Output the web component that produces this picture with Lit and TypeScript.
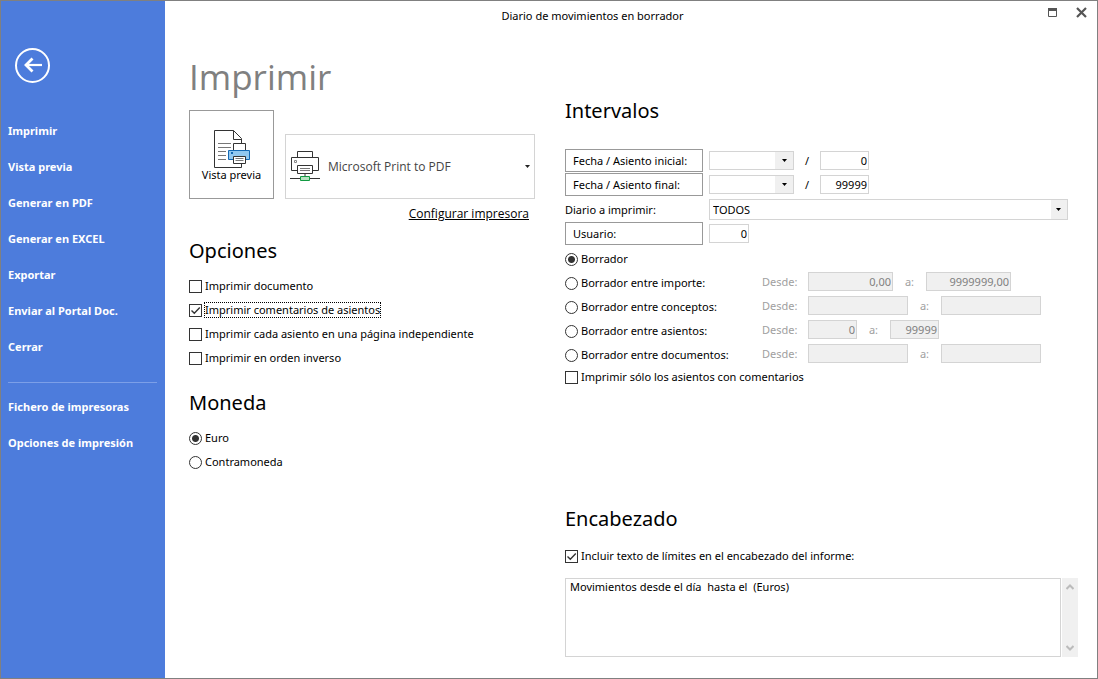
import { LitElement, html, css, svg } from "lit";
import { customElement, state } from "lit/decorators.js";

interface RangeRow {
  id: string;
  label: string;
  from: string;
  to: string;
  size: "amount" | "text" | "number";
}

const ACTIONS = [
  "Imprimir",
  "Vista previa",
  "Generar en PDF",
  "Generar en EXCEL",
  "Exportar",
  "Enviar al Portal Doc.",
  "Cerrar",
];

const SETTINGS = ["Fichero de impresoras", "Opciones de impresión"];

const OPTIONS = [
  { id: "documento", label: "Imprimir documento", checked: false },
  { id: "comentarios", label: "Imprimir comentarios de asientos", checked: true },
  { id: "pagina", label: "Imprimir cada asiento en una página independiente", checked: false },
  { id: "inverso", label: "Imprimir en orden inverso", checked: false },
];

const RANGES: RangeRow[] = [
  { id: "importe", label: "Borrador entre importe:", from: "0,00", to: "9999999,00", size: "amount" },
  { id: "conceptos", label: "Borrador entre conceptos:", from: "", to: "", size: "text" },
  { id: "asientos", label: "Borrador entre asientos:", from: "0", to: "99999", size: "number" },
  { id: "documentos", label: "Borrador entre documentos:", from: "", to: "", size: "text" },
];

const backIcon = svg`<svg width="36" height="36" viewBox="0 0 36 36" fill="none" stroke="#fff" aria-hidden="true">
  <circle cx="17.5" cy="18.5" r="16.5" stroke-width="2" />
  <path d="M10.5 18H27" stroke-width="2.2" />
  <path d="M17.5 11.5L11 18L17.5 24.5" stroke-width="2.8" />
</svg>`;

const previewIcon = svg`<svg width="38" height="40" viewBox="0 0 38 40" fill="none" aria-hidden="true">
  <path d="M1.5 1.5H20.5L28.5 9.5V38.5H1.5Z" fill="#fff" stroke="#333" />
  <path d="M20.5 1.5V10.5H28.5" stroke="#333" />
  <path d="M5 14.5H18M5 18.5H18M5 22.5H13M5 26.5H13M5 30.5H13" stroke="#777" />
  <path d="M20.5 14.5H32.5V22H20.5Z" fill="#fff" stroke="#333" />
  <path d="M15.5 21.5H36.5V30.5H15.5Z" fill="#91c8f0" stroke="#1469b4" />
  <path d="M18 23H20V25H18Z" fill="#1469b4" />
  <path d="M20.5 27.5H32.5V34.5H20.5Z" fill="#fff" stroke="#333" />
  <path d="M22.5 29.5H30.5M22.5 31.5H30.5" stroke="#777" />
</svg>`;

const printerIcon = svg`<svg width="30" height="31" viewBox="0 0 30 31" fill="none" aria-hidden="true">
  <path d="M7.5 6.5V0.5H22.5V6.5" stroke="#333" />
  <path d="M7.5 19.5H1.5V6.5H28.5V19.5H22.5" stroke="#333" />
  <path d="M4.5 9.5H6.5V11.5H4.5Z" stroke="#888" />
  <path d="M7.5 14.5H22.5V22.5H7.5Z" fill="#fff" stroke="#333" />
  <path d="M10 17.5H20M10 19.5H20" stroke="#777" />
  <path d="M15 23V25" stroke="#999" stroke-width="2" />
  <path d="M0 27.5H10M20 27.5H30" stroke="#333" />
  <path d="M10.5 25.5H19.5V29.5H10.5Z" fill="#b5e2c0" stroke="#129a42" />
</svg>`;

@customElement("app-root")
export class AppRoot extends LitElement {
  @state() private mode = "borrador";

  static styles = css`
    :host {
      display: block;
      font-family: "Noto Sans", sans-serif;
      font-size: 11px;
      line-height: 16px;
      color: #000;
    }
    * {
      box-sizing: border-box;
    }
    button,
    input,
    select,
    textarea {
      font: inherit;
      color: inherit;
      margin: 0;
      padding: 0;
      border: 0;
      border-radius: 0;
      background: none;
      outline: 0;
    }
    svg {
      display: block;
    }
    .window {
      display: flex;
      min-height: 100vh;
      border: 1px solid #808080;
      background: #fff;
    }

    .sidebar {
      flex: 0 0 164px;
      padding: 46px 8px 0 7px;
      background: #4d7cdc;
      color: #fff;
    }
    .back {
      display: block;
      margin: 0 0 30px 7px;
    }
    .menu {
      list-style: none;
      margin: 0;
      padding: 0;
    }
    .entry {
      display: block;
      width: 100%;
      height: 36px;
      text-align: left;
      font-weight: 700;
      white-space: nowrap;
    }
    .rule {
      height: 1px;
      margin: 17px 0 6px;
      border: 0;
      background: #7c9fe8;
    }

    .page {
      flex: 1;
      min-width: 0;
    }
    .titlebar {
      display: flex;
      height: 30px;
      align-items: center;
    }
    .caption {
      flex: 1;
      text-align: center;
    }
    .controls {
      display: flex;
      flex: 0 0 77px;
      justify-content: flex-end;
      gap: 18px;
      padding: 0 10px 8px 0;
    }
    .columns {
      display: grid;
      grid-template-columns: 346px minmax(0, 1fr);
      column-gap: 30px;
      padding: 0 19px 0 24px;
    }

    h1 {
      margin: 22px 0 9px;
      font-family: "Open Sans", sans-serif;
      font-size: 35px;
      line-height: 48px;
      font-weight: 400;
      color: #808080;
    }
    h2 {
      margin: 0;
      font-size: 20px;
      line-height: 32px;
      font-weight: 400;
    }

    .output {
      display: flex;
      align-items: flex-end;
      gap: 11px;
    }
    .preview {
      display: flex;
      flex-direction: column;
      align-items: center;
      width: 85px;
      height: 89px;
      padding: 18px 0 0;
      border: 1px solid #999;
    }
    .preview-label {
      margin-top: -2px;
    }
    .printer {
      display: flex;
      flex: 1;
      align-items: center;
      gap: 8px;
      height: 65px;
      padding: 0 4px;
      border: 1px solid #d4d4d4;
    }
    .printer select {
      flex: 1;
      height: 63px;
      appearance: none;
      font-family: "Open Sans", sans-serif;
      font-size: 12px;
      color: #444;
      background: url("data:image/svg+xml,%3Csvg xmlns='http://www.w3.org/2000/svg' width='5' height='3'%3E%3Cpath d='M0 0h5L2.5 3z' fill='%23222'/%3E%3C/svg%3E")
        right center no-repeat;
    }
    .configure {
      margin: 7px 6px 13px 0;
      text-align: right;
      font-family: "Open Sans", sans-serif;
      font-size: 12px;
    }
    .link {
      color: #000;
    }

    .choices {
      margin: 7px 0 17px;
    }
    .choice {
      display: flex;
      align-items: center;
      gap: 2px;
      height: 24px;
    }
    .short {
      height: 20px;
    }
    .text {
      padding: 0 1px;
      white-space: nowrap;
    }
    .focused {
      outline: 1px dotted #000;
      outline-offset: -1px;
    }
    .box,
    .dot {
      flex: none;
      width: 13px;
      height: 13px;
      appearance: none;
      border: 1px solid #333;
      background: #fff;
    }
    .box:checked {
      background: url("data:image/svg+xml,%3Csvg xmlns='http://www.w3.org/2000/svg' width='11' height='11'%3E%3Cpath d='M1.5 5.5L4.3 8.2L9.8 2.6' fill='none' stroke='%23333' stroke-width='1.4'/%3E%3C/svg%3E")
        center no-repeat;
    }
    .dot {
      border-radius: 50%;
    }
    .dot:checked {
      background: radial-gradient(circle, #333 3px, transparent 4px);
    }

    .intervals {
      padding-top: 64px;
    }
    .fields {
      margin-top: 22px;
    }
    .row {
      display: flex;
      align-items: center;
      height: 24px;
      padding-bottom: 1px;
    }
    .low {
      padding: 1px 0 0;
    }
    .picker,
    .name {
      flex: none;
      width: 138px;
      margin-right: 6px;
      text-align: left;
    }
    .picker {
      height: 23px;
      padding-left: 7px;
      border: 1px solid #999;
    }
    .field {
      flex: none;
      height: 19px;
      border: 1px solid #d4d4d4;
      background: #fff;
      text-align: right;
      padding: 0 1px 1px;
    }
    .combo {
      flex: none;
      width: 85px;
      height: 19px;
      appearance: none;
      padding: 0 18px 0 3px;
      border: 1px solid #d4d4d4;
      background:
        url("data:image/svg+xml,%3Csvg xmlns='http://www.w3.org/2000/svg' width='5' height='3'%3E%3Cpath d='M0 0h5L2.5 3z'/%3E%3C/svg%3E")
          right 6px center no-repeat,
        linear-gradient(#f0f0f0, #f0f0f0) right / 18px 100% no-repeat;
    }
    .journal {
      flex: 1;
      height: 21px;
      margin-right: 10px;
      background-size: auto, 16px 100%;
    }
    .slash {
      width: 26px;
      text-align: center;
    }
    .number {
      width: 49px;
    }
    .user {
      width: 40px;
    }
    .amount {
      width: 85px;
    }
    .wide {
      width: 100px;
    }
    .modes {
      margin-top: 2px;
    }
    .range {
      display: flex;
      height: 24px;
    }
    .range .choice {
      flex: 0 0 197px;
    }
    .span {
      display: flex;
      align-items: center;
      height: 21px;
      color: #a0a0a0;
    }
    .since {
      width: 46px;
    }
    .until {
      width: 33px;
      text-align: center;
    }
    .span .field {
      background: #f0f0f0;
      color: #808080;
    }

    .heading {
      margin-top: 116px;
    }
    .include {
      margin: 9px 0 10px;
    }
    .note {
      display: flex;
      gap: 1px;
      height: 79px;
    }
    .note textarea {
      flex: 1;
      resize: none;
      overflow: hidden;
      padding: 0 4px;
      border: 1px solid #d4d4d4;
      white-space: pre-wrap;
    }
    .scroller {
      display: flex;
      flex-direction: column;
      justify-content: space-between;
      align-items: center;
      width: 16px;
      padding: 6px 0;
      background: #f0f0f0;
    }
  `;

  private renderRange(r: RangeRow) {
    const size = r.size === "text" ? "wide" : r.size;
    return html`<div class="range">
      <label class="choice">
        <input class="dot" type="radio" name="mode" .checked=${this.mode === r.id}
          @change=${() => (this.mode = r.id)} />
        <span class="text">${r.label}</span>
      </label>
      <div class="span">
        <label class="since" for="${r.id}-from">Desde:</label>
        <input class="field ${size}" id="${r.id}-from" .value=${r.from} ?disabled=${this.mode !== r.id} />
        <label class="until" for="${r.id}-to">a:</label>
        <input class="field ${size}" id="${r.id}-to" .value=${r.to} ?disabled=${this.mode !== r.id} />
      </div>
    </div>`;
  }

  private renderDateRow(label: string, entry: string) {
    return html`<div class="row">
      <button class="picker">${label}</button>
      <select class="combo" aria-label=${label}><option></option></select>
      <span class="slash">/</span>
      <input class="field number" aria-label=${label} .value=${entry} />
    </div>`;
  }

  render() {
    return html`<div class="window">
      <nav class="sidebar">
        <button class="back" aria-label="Volver">${backIcon}</button>
        <ul class="menu">
          ${ACTIONS.map((a) => html`<li><button class="entry">${a}</button></li>`)}
        </ul>
        <hr class="rule" />
        <ul class="menu">
          ${SETTINGS.map((a) => html`<li><button class="entry">${a}</button></li>`)}
        </ul>
      </nav>
      <div class="page">
        <header class="titlebar">
          <div class="caption">Diario de movimientos en borrador</div>
          <div class="controls">
            <button aria-label="Maximizar">
              <svg width="11" height="11" viewBox="0 0 11 11"><path d="M1.5 2.5H9.5V9.5H1.5Z" fill="none" stroke="#555" /><path d="M1 1H10V4H1Z" fill="#555" /></svg>
            </button>
            <button aria-label="Cerrar ventana">
              <svg width="11" height="11" viewBox="0 0 11 11"><path d="M1 1L10 10M10 1L1 10" stroke="#555" stroke-width="2.2" /></svg>
            </button>
          </div>
        </header>
        <main class="columns">
          <section>
            <h1>Imprimir</h1>
            <div class="output">
              <button class="preview">${previewIcon}<span class="preview-label">Vista previa</span></button>
              <div class="printer">
                ${printerIcon}
                <select aria-label="Impresora"><option>Microsoft Print to PDF</option></select>
              </div>
            </div>
            <div class="configure"><a class="link" href="#">Configurar impresora</a></div>
            <h2>Opciones</h2>
            <div class="choices">
              ${OPTIONS.map(
                (o) => html`<label class="choice">
                  <input class="box" type="checkbox" .checked=${o.checked} />
                  <span class="text ${o.id === "comentarios" ? "focused" : ""}">${o.label}</span>
                </label>`
              )}
            </div>
            <h2>Moneda</h2>
            <div class="choices">
              <label class="choice"><input class="dot" type="radio" name="currency" checked /><span class="text">Euro</span></label>
              <label class="choice"><input class="dot" type="radio" name="currency" /><span class="text">Contramoneda</span></label>
            </div>
          </section>
          <section class="intervals">
            <h2>Intervalos</h2>
            <div class="fields">
              ${this.renderDateRow("Fecha / Asiento inicial:", "0")}
              ${this.renderDateRow("Fecha / Asiento final:", "99999")}
              <div class="row low">
                <label class="name" for="journal">Diario a imprimir:</label>
                <select class="combo journal" id="journal"><option>TODOS</option></select>
              </div>
              <div class="row low">
                <button class="picker">Usuario:</button>
                <input class="field user" aria-label="Usuario" value="0" />
              </div>
            </div>
            <div class="modes">
              <label class="choice">
                <input class="dot" type="radio" name="mode" .checked=${this.mode === "borrador"}
                  @change=${() => (this.mode = "borrador")} />
                <span class="text">Borrador</span>
              </label>
              ${RANGES.map((r) => this.renderRange(r))}
              <label class="choice short">
                <input class="box" type="checkbox" />
                <span class="text">Imprimir sólo los asientos con comentarios</span>
              </label>
            </div>
            <h2 class="heading">Encabezado</h2>
            <label class="choice include">
              <input class="box" type="checkbox" checked />
              <span class="text">Incluir texto de límites en el encabezado del informe:</span>
            </label>
            <div class="note">
              <textarea aria-label="Texto del encabezado" .value=${"Movimientos desde el día  hasta el  (Euros)"}></textarea>
              <div class="scroller">
                <button aria-label="Subir">
                  <svg width="8" height="6" viewBox="0 0 8 6"><path d="M0.5 5L4 1.5L7.5 5" fill="none" stroke="#bbb" stroke-width="2" /></svg>
                </button>
                <button aria-label="Bajar">
                  <svg width="8" height="6" viewBox="0 0 8 6"><path d="M0.5 1L4 4.5L7.5 1" fill="none" stroke="#bbb" stroke-width="2" /></svg>
                </button>
              </div>
            </div>
          </section>
        </main>
      </div>
    </div>`;
  }
}
